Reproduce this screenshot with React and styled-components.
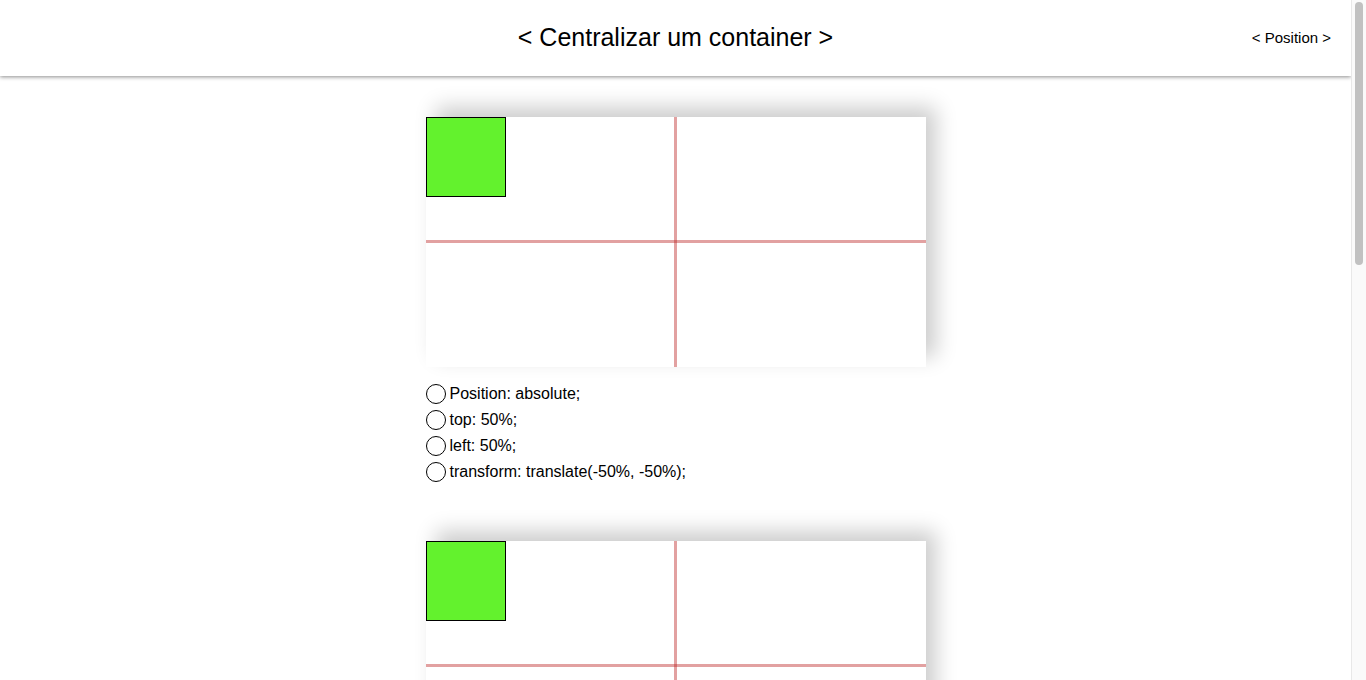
import React from "react";
import styled, { createGlobalStyle } from "styled-components";

const GlobalStyle = createGlobalStyle`
  body {
    margin: 0;
    font-family: "Liberation Sans", Arial, sans-serif;
    background: #fff;
    color: #000;
  }
`;

const Shell = styled.div`
  display: flex;
  align-items: flex-start;
`;

const Page = styled.div`
  flex: 1;
  min-width: 0;
`;

const ScrollRail = styled.div`
  position: sticky;
  top: 0;
  flex: none;
  width: 15px;
  height: 100vh;
  box-sizing: border-box;
  background: #fafafa;
  border-left: 1px solid #e8e8e8;
  padding: 2px 3px 0 3px;
`;

const ScrollThumb = styled.div`
  width: 8px;
  height: 263px;
  border-radius: 4px;
  background: #c1c1c1;
`;

const Header = styled.header`
  display: flex;
  align-items: center;
  justify-content: center;
  position: relative;
  height: 76px;
  padding-bottom: 2px;
  box-sizing: border-box;
  background: #fff;
  box-shadow: 0 1px 4px rgba(0, 0, 0, 0.45);
`;

const Title = styled.h1`
  margin: 0;
  font-size: 25px;
  font-weight: 400;
`;

const NavLink = styled.a`
  position: absolute;
  right: 20px;
  top: 29px;
  font-size: 15px;
  color: #000;
  text-decoration: none;
`;

const Main = styled.main`
  display: flex;
  flex-direction: column;
  align-items: center;
  padding-top: 41px;
  gap: 59px;
  padding-bottom: 40px;
`;

const Section = styled.section`
  width: 500px;
  display: flex;
  flex-direction: column;
  gap: 17px;
`;

const Stage = styled.div`
  position: relative;
  width: 500px;
  height: 250px;
  background: #fff;
  box-shadow: 10px -10px 20px rgba(0, 0, 0, 0.2);
`;

const Line = styled.div`
  position: absolute;
  background: rgba(185, 30, 30, 0.42);
  ${(p) =>
    p.$vertical
      ? "top: 0; bottom: 0; left: 248px; width: 3px;"
      : "left: 0; right: 0; top: 123px; height: 3px;"}
`;

const Square = styled.div`
  position: absolute;
  top: 0;
  left: 0;
  width: 80px;
  height: 80px;
  box-sizing: border-box;
  background: #63f22d;
  border: 1px solid #000;
`;

const Steps = styled.ul`
  list-style: none;
  margin: 0;
  padding: 0;
  display: flex;
  flex-direction: column;
  gap: 6px;
`;

const Step = styled.li`
  display: flex;
  align-items: center;
  gap: 4px;
  font-size: 16px;
  height: 20px;
`;

const Check = styled.span`
  width: 20px;
  height: 20px;
  box-sizing: border-box;
  border: 1px solid #000;
  border-radius: 50%;
  flex: none;
`;

const steps = [
  "Position: absolute;",
  "top: 50%;",
  "left: 50%;",
  "transform: translate(-50%, -50%);",
];

function Demo() {
  return (
    <Section>
      <Stage>
        <Line $vertical />
        <Line />
        <Square />
      </Stage>
      <Steps>
        {steps.map((s) => (
          <Step key={s}>
            <Check />
            {s}
          </Step>
        ))}
      </Steps>
    </Section>
  );
}

export default function App() {
  return (
    <>
      <GlobalStyle />
      <Shell>
        <Page>
          <Header>
            <Title>&lt; Centralizar um container &gt;</Title>
            <NavLink href="#">&lt; Position &gt;</NavLink>
          </Header>
          <Main>
            <Demo />
            <Demo />
            <Demo />
            <Demo />
          </Main>
        </Page>
        <ScrollRail>
          <ScrollThumb />
        </ScrollRail>
      </Shell>
    </>
  );
}
